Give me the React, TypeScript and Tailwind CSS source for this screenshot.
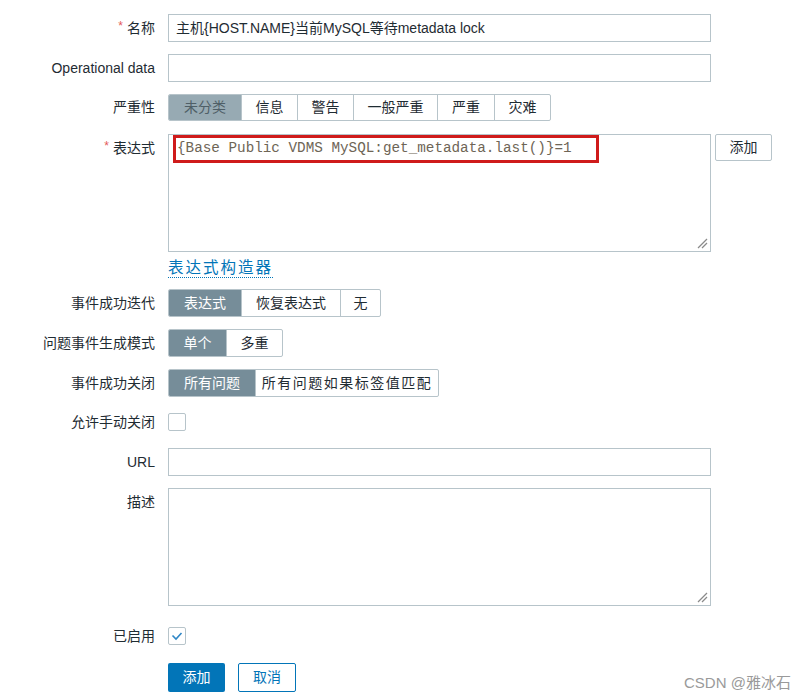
import React from "react";

const Label = ({ children, req }: { children: React.ReactNode; req?: boolean }) => (
  <div className="w-[155px] shrink-0 h-[28px] flex items-center justify-end whitespace-nowrap">
    {req && <span className="text-[#e45959] text-[12px] mr-[4px] -mt-[4px]">*</span>}
    <span>{children}</span>
  </div>
);

const Seg = ({ items, widths, active, sev }: { items: string[]; widths: string[]; active: number; sev?: boolean }) => (
  <div className="flex border border-[#b7c4ca] rounded-[2px] overflow-hidden h-full bg-white">
    {items.map((t, i) => (
      <div
        key={t}
        className={
          "flex items-center justify-center whitespace-nowrap " +
          widths[i] +
          (i > 0 ? " border-l border-[#b7c4ca]" : "") +
          (i === active ? (sev ? " bg-[#97aab3] text-[#4f5f67]" : " bg-[#768d99] text-white") : "")
        }
      >
        {t}
      </div>
    ))}
  </div>
);

const Handle = () => (
  <svg className="absolute right-[2px] bottom-[2px]" width="12" height="12" viewBox="0 0 12 12">
    <line x1="2" y1="11" x2="11" y2="2" stroke="#8a8a8a" strokeWidth="1.2" />
    <line x1="6" y1="11" x2="11" y2="6" stroke="#8a8a8a" strokeWidth="1.2" />
  </svg>
);

const Check = ({ checked }: { checked?: boolean }) => (
  <div className="w-[18px] h-[18px] border border-[#b7c4ca] rounded-[2px] bg-white flex items-center justify-center">
    {checked && (
      <svg width="12" height="10" viewBox="0 0 12 10">
        <polyline points="1.5,4.5 5,8 10.5,2" fill="none" stroke="#2f87c6" strokeWidth="1.6" />
      </svg>
    )}
  </div>
);

export default function App() {
  return (
    <div className="relative w-[799px] h-[700px] bg-white pt-[14px] font-['Liberation_Sans','Noto_Sans_CJK_SC',sans-serif] text-[14px] text-[#1f2c33] overflow-hidden">
      {/* 名称 */}
      <div className="flex h-[28px]">
        <Label req>名称</Label>
        <div className="ml-[13px] w-[543px] h-[28px] border border-[#b7c4ca] flex items-center pl-[7px] whitespace-nowrap">
          主机{"{HOST.NAME}"}当前MySQL等待metadata lock
        </div>
      </div>
      {/* Operational data */}
      <div className="flex h-[28px] mt-[12px]">
        <Label>Operational data</Label>
        <div className="ml-[13px] w-[543px] h-[28px] border border-[#b7c4ca]" />
      </div>
      {/* 严重性 */}
      <div className="flex h-[27px] mt-[12px]">
        <div className="w-[155px] shrink-0 flex items-center justify-end">严重性</div>
        <div className="ml-[13px] h-[27px]">
          <Seg
            sev
            active={0}
            items={["未分类", "信息", "警告", "一般严重", "严重", "灾难"]}
            widths={["w-[72px]", "w-[56px]", "w-[56px]", "w-[84px]", "w-[57px]", "w-[56px]"]}
          />
        </div>
      </div>
      {/* 表达式 */}
      <div className="flex mt-[13px]">
        <Label req>表达式</Label>
        <div className="ml-[13px] relative w-[543px] h-[118px] border border-[#b7c4ca]">
          <div className="ml-[4px] w-[426px] h-[28px] border-[3px] border-[#cf1b1b] flex items-center pl-[1px] font-['Liberation_Mono',monospace] text-[14.3px] text-[#6e6556] whitespace-nowrap">
            {"{Base Public VDMS MySQL:get_metadata.last()}=1"}
          </div>
          <Handle />
        </div>
        <div className="ml-[4px] w-[57px] h-[27px] border border-[#b7c4ca] rounded-[2px] flex items-center justify-center">
          添加
        </div>
      </div>
      {/* 表达式构造器 */}
      <div className="flex h-[20px] mt-[6px]">
        <div className="w-[155px] shrink-0" />
        <div className="ml-[13px] h-[20px] flex items-center text-[15.5px] tracking-[2px] text-[#0275b8] border-b border-dotted border-[#0275b8] leading-none">
          表达式构造器
        </div>
      </div>
      {/* 事件成功迭代 */}
      <div className="flex h-[28px] mt-[11px]">
        <Label>事件成功迭代</Label>
        <div className="ml-[13px] h-[28px]">
          <Seg active={0} items={["表达式", "恢复表达式", "无"]} widths={["w-[72px]", "w-[99px]", "w-[40px]"]} />
        </div>
      </div>
      {/* 问题事件生成模式 */}
      <div className="flex h-[28px] mt-[12px]">
        <Label>问题事件生成模式</Label>
        <div className="ml-[13px] h-[28px]">
          <Seg active={0} items={["单个", "多重"]} widths={["w-[57px]", "w-[56px]"]} />
        </div>
      </div>
      {/* 事件成功关闭 */}
      <div className="flex h-[28px] mt-[12px]">
        <Label>事件成功关闭</Label>
        <div className="ml-[13px] h-[28px]">
          <Seg
            active={0}
            items={["所有问题", "所有问题如果标签值匹配"]}
            widths={["w-[86px]", "w-[183px] tracking-[1.5px]"]}
          />
        </div>
      </div>
      {/* 允许手动关闭 */}
      <div className="flex h-[28px] mt-[11px]">
        <Label>允许手动关闭</Label>
        <div className="ml-[13px] h-[28px] flex items-center">
          <Check />
        </div>
      </div>
      {/* URL */}
      <div className="flex h-[28px] mt-[12px]">
        <Label>URL</Label>
        <div className="ml-[13px] w-[543px] h-[28px] border border-[#b7c4ca]" />
      </div>
      {/* 描述 */}
      <div className="flex mt-[12px]">
        <Label>描述</Label>
        <div className="ml-[13px] relative w-[543px] h-[118px] border border-[#b7c4ca]">
          <Handle />
        </div>
      </div>
      {/* 已启用 */}
      <div className="flex h-[28px] mt-[16px]">
        <Label>已启用</Label>
        <div className="ml-[13px] h-[28px] flex items-center">
          <Check checked />
        </div>
      </div>
      {/* Buttons */}
      <div className="flex h-[29px] mt-[13px]">
        <div className="w-[155px] shrink-0" />
        <div className="ml-[13px] flex gap-[13px]">
          <div className="w-[57px] h-[29px] bg-[#0275b8] text-white rounded-[2px] flex items-center justify-center">
            添加
          </div>
          <div className="w-[58px] h-[29px] bg-white border border-[#0275b8] text-[#0275b8] rounded-[2px] flex items-center justify-center">
            取消
          </div>
        </div>
      </div>
      <div className="absolute left-[684px] top-[672px] text-[15px] text-[#9a9a9a] whitespace-nowrap">
        CSDN @雅冰石
      </div>
    </div>
  );
}
